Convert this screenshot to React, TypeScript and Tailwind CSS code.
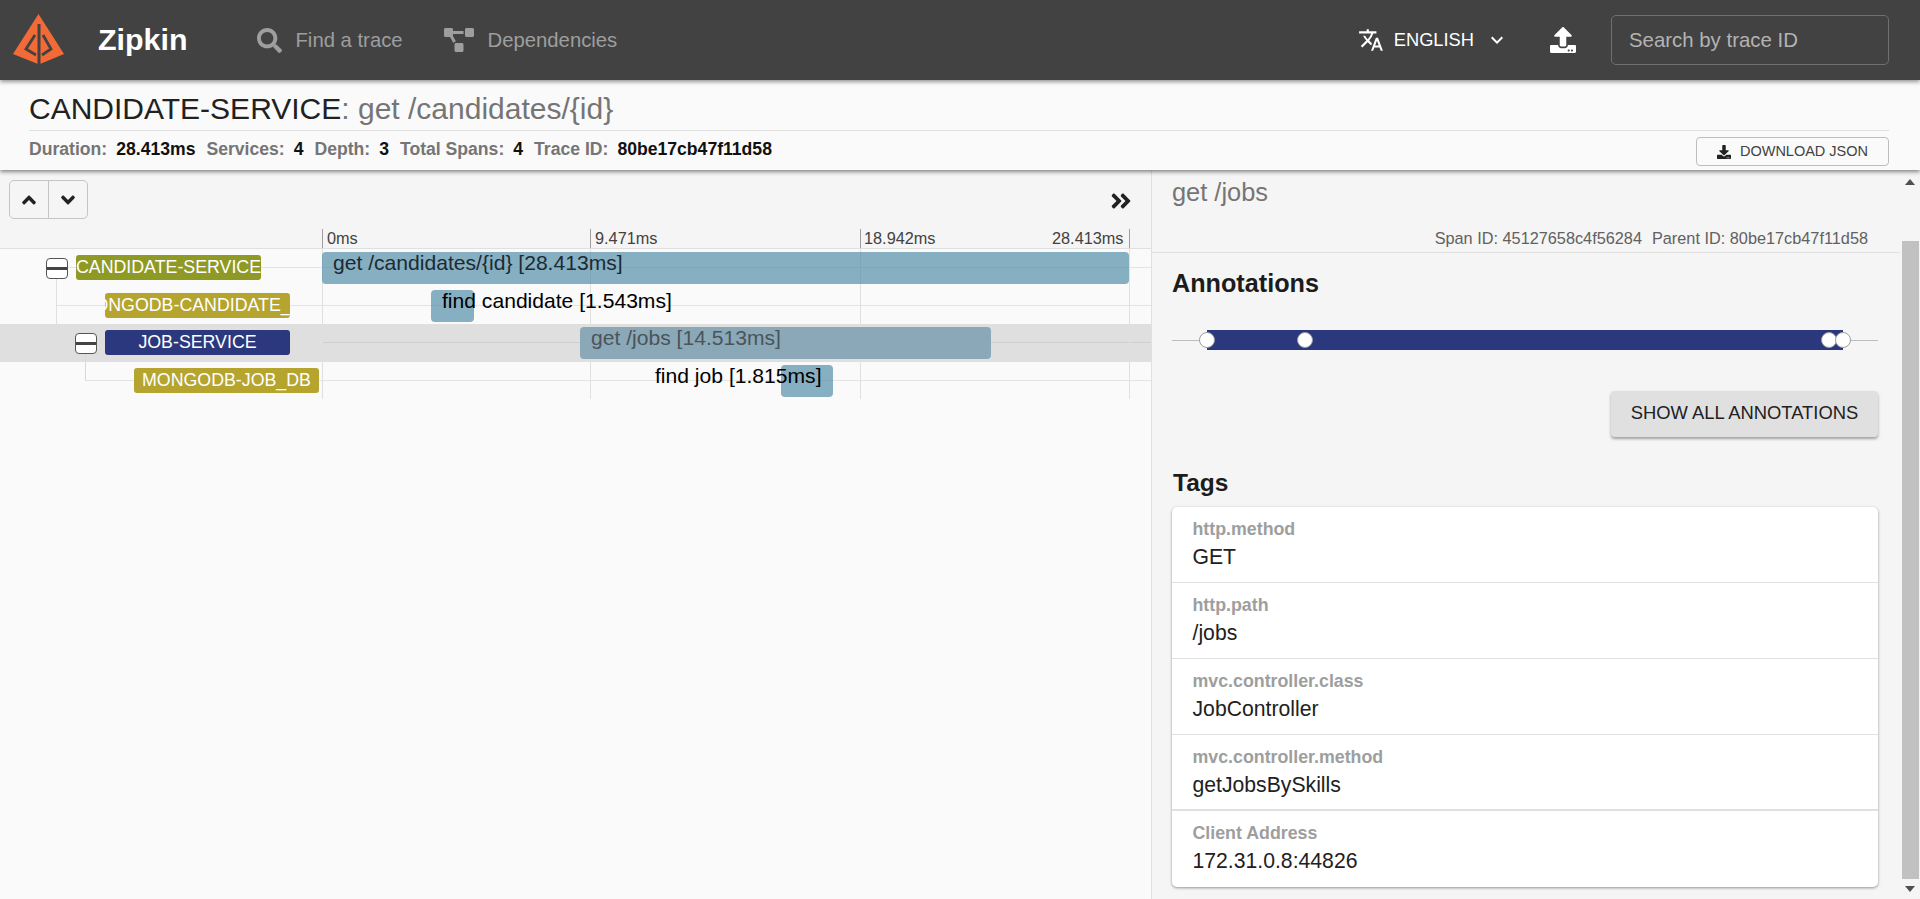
import React from "react";
import { FaSearch, FaProjectDiagram, FaUpload, FaDownload, FaAngleUp, FaAngleDown, FaAngleDoubleRight } from "react-icons/fa";
import { MdTranslate, MdExpandMore } from "react-icons/md";

const Logo = () => (
  <svg width="52" height="52" viewBox="0 0 52 52" className="shrink-0">
    <path d="M25.5 0 L51 40 L27 50 L25 50 L0 40 Z" fill="#f26b36" />
    <path d="M26 10 V50" stroke="#424242" strokeWidth="3" fill="none" />
    <path d="M22 21 L13 35 L23 41" stroke="#424242" strokeWidth="2.8" fill="none" />
    <path d="M30 21 L38 35 L29 41" stroke="#424242" strokeWidth="2.8" fill="none" />
  </svg>
);

const Toggle = () => (
  <div className="w-[21.5px] h-[21px] rounded-[4px] border-[1.5px] border-[#555] bg-white flex items-center shrink-0">
    <div className="w-full h-[3px] bg-[#444]" />
  </div>
);

const ticks = [322, 590, 860, 1129];

type Row = {
  service: string;
  color: string;
  depth: number;
  lineLeft: number;
  toggle?: boolean;
  barLeft: number;
  barWidth: number;
  text: string;
  textLeft: number;
  selected?: boolean;
};

const rows: Row[] = [
  { service: "CANDIDATE-SERVICE", color: "bg-[#8f9a26]", depth: 76, lineLeft: 67, toggle: true, barLeft: 322, barWidth: 807, text: "get /candidates/{id} [28.413ms]", textLeft: 333 },
  { service: "MONGODB-CANDIDATE_DB", color: "bg-[#b5a52f]", depth: 105, lineLeft: 56, barLeft: 431, barWidth: 43, text: "find candidate [1.543ms]", textLeft: 442 },
  { service: "JOB-SERVICE", color: "bg-[#2c387e]", depth: 105, lineLeft: 322, toggle: true, barLeft: 580, barWidth: 411, text: "get /jobs [14.513ms]", textLeft: 591, selected: true },
  { service: "MONGODB-JOB_DB", color: "bg-[#b5a52f]", depth: 134, lineLeft: 85, barLeft: 781, barWidth: 52, text: "find job [1.815ms]", textLeft: 655 },
];

const TimelineRow = ({ r, i }: { r: Row; i: number }) => (
  <div className={`relative h-[37.5px] ${r.selected ? "bg-[#dfdfdf]" : ""}`}>
    <div style={{ left: r.lineLeft }} className={`absolute right-0 top-[18px] h-px ${r.selected ? "bg-[#cfcfcf]" : "bg-[#e4e4e4]"}`} />
    {i === 1 && <div className="absolute left-[56px] w-px top-[-8px] h-[46px] bg-[#e0e0e0]" />}
    {i === 3 && <div className="absolute left-[85px] w-px top-[-8px] h-[27px] bg-[#d8d8d8]" />}
    {ticks.map((t) => (
      <div key={t} style={{ left: t }} className="absolute top-0 bottom-0 w-px bg-[#e0e0e0]" />
    ))}
    <div
      style={{ left: r.barLeft, width: r.barWidth }}
      className={`absolute top-[3px] h-[32px] rounded-[4px] ${r.selected ? "bg-[#8aa8b7]" : "bg-[#548fa9]/70"}`}
    />
    <div
      style={{ left: r.textLeft }}
      className={`absolute top-[2px] text-[21.1px] leading-[24px] whitespace-nowrap ${r.selected ? "text-[#4a5459]" : i === 0 ? "text-[#1c2a33]" : "text-black"}`}
    >
      {r.text}
    </div>
    <div style={{ left: r.depth }} className="absolute top-[6px] flex items-center">
      {r.toggle && (
        <div className="absolute left-[-30px] top-[2.5px]">
          <Toggle />
        </div>
      )}
      <div className={`w-[185px] h-[25px] rounded-[3px] ${r.color} text-white text-[17.8px] flex items-center justify-center overflow-hidden whitespace-nowrap`}>
        {r.service}
      </div>
    </div>
  </div>
);

const Stat = ({ label, value }: { label: string; value: string }) => (
  <span className="flex gap-[9px]">
    <span className="text-[#757575]">{label}</span>
    <span className="text-[#111]">{value}</span>
  </span>
);

const Tag = ({ k, v, extra }: { k: string; v: string; extra?: string }) => (
  <div className={`h-[76px] px-[20.5px] pt-[11px] ${extra ?? ""}`}>
    <div className="text-[17.8px] leading-[22px] font-bold text-[#9e9e9e]">{k}</div>
    <div className="text-[21.2px] leading-[26px] mt-[4px] text-[#212121]">{v}</div>
  </div>
);

const Dot = ({ x }: { x: number }) => (
  <div style={{ left: x }} className="absolute top-[-8px] w-[16px] h-[16px] -ml-[8px] rounded-full bg-white border border-[#9e9e9e]" />
);

export default function App() {
  return (
    <div className="h-[899px] w-[1920px] overflow-hidden flex flex-col bg-[#f5f5f5] font-['Liberation_Sans',Arial,sans-serif]">
      <header className="relative z-20 h-[80px] shrink-0 bg-[#424242] shadow-[0_2px_4px_rgba(0,0,0,0.4)] flex items-center pl-[13px] pr-[31px]">
        <Logo />
        <div className="ml-[33px] text-[30.4px] font-bold text-white">Zipkin</div>
        <div className="ml-[70px] flex items-center text-[#9e9e9e] text-[20.3px]">
          <FaSearch className="w-[25px] h-[25px]" />
          <span className="ml-[13px]">Find a trace</span>
        </div>
        <div className="ml-[41px] flex items-center text-[#9e9e9e] text-[20.3px]">
          <FaProjectDiagram className="w-[30px] h-[24px]" />
          <span className="ml-[14px]">Dependencies</span>
        </div>
        <div className="ml-auto flex items-center text-white">
          <MdTranslate className="w-[26px] h-[26px]" />
          <span className="ml-[10px] text-[18.3px]">ENGLISH</span>
          <MdExpandMore className="ml-[11px] w-[24px] h-[24px]" />
          <FaUpload className="ml-[41px] w-[26px] h-[26px]" />
          <div className="ml-[35px] w-[278px] h-[50px] rounded-[5px] border border-[#707070] flex items-center pl-[17px] text-[20.4px] text-[#b3b3b3]">
            Search by trace ID
          </div>
        </div>
      </header>

      <section className="relative z-10 h-[90px] shrink-0 bg-[#fafafa] shadow-[0_2px_4px_rgba(0,0,0,0.45)] pl-[29px] pr-[31px]">
        <div className="h-[51px] border-b border-[#e0e0e0] flex items-end pb-[1px] text-[30px] leading-[40px]">
          <span className="text-[#212121]">CANDIDATE-SERVICE</span>
          <span className="text-[#757575] whitespace-pre">: get /candidates/{"{id}"}</span>
        </div>
        <div className="flex justify-between">
          <div className="flex gap-[11px] mt-[6px] text-[17.6px] leading-[24px] font-bold">
            <Stat label="Duration:" value="28.413ms" />
            <Stat label="Services:" value="4" />
            <Stat label="Depth:" value="3" />
            <Stat label="Total Spans:" value="4" />
            <Stat label="Trace ID:" value="80be17cb47f11d58" />
          </div>
          <button className="mt-[6px] w-[193px] h-[29px] rounded-[4px] border border-[#bdbdbd] flex items-center justify-center gap-[9px] text-[14.5px] text-[#424242]">
            <FaDownload className="w-[14px] h-[14px] text-[#222]" />
            DOWNLOAD JSON
          </button>
        </div>
      </section>

      <main className="flex-1 flex min-h-0">
        <div className="w-[1152px] shrink-0 border-r border-[#e0e0e0] flex flex-col">
          <div className="h-[59px] shrink-0 flex items-start justify-between pt-[10px] pl-[9px] pr-[18px]">
            <div className="flex h-[39px] w-[79px] rounded-[5px] border border-[#c4c4c4]">
              <div className="w-1/2 border-r border-[#c4c4c4] flex items-center justify-center">
                <FaAngleUp className="w-[22px] h-[22px] text-[#222]" />
              </div>
              <div className="w-1/2 flex items-center justify-center">
                <FaAngleDown className="w-[22px] h-[22px] text-[#222]" />
              </div>
            </div>
            <FaAngleDoubleRight className="w-[24px] h-[24px] mt-[9px] text-[#222]" />
          </div>
          <div className="relative h-[20px] shrink-0 border-b border-[#e0e0e0] text-[16.3px] leading-[19px] text-[#424242]">
            {ticks.map((t) => (
              <div key={t} style={{ left: t }} className="absolute top-0 h-[19px] w-px bg-[#9e9e9e]" />
            ))}
            <span className="absolute left-[327px] top-[0px]">0ms</span>
            <span className="absolute left-[595px] top-[0px]">9.471ms</span>
            <span className="absolute left-[864px] top-[0px]">18.942ms</span>
            <span className="absolute left-[1052px] top-[0px]">28.413ms</span>
          </div>
          <div className="flex-1 bg-[#fafafa]">
            {rows.map((r, i) => (
              <TimelineRow key={r.service} r={r} i={i} />
            ))}
          </div>
        </div>

        <div className="w-[748px] shrink-0 flex flex-col">
          <div className="h-[83px] border-b border-[#e0e0e0] shrink-0 pl-[20px] pr-[32px] relative">
            <div className="text-[25.4px] leading-[30px] mt-[7px] text-[#757575]">get /jobs</div>
            <div className="flex justify-end gap-[10px] mt-[21px] text-[16.3px] leading-[20px] text-[#616161]">
              <span>Span ID: 45127658c4f56284</span>
              <span>Parent ID: 80be17cb47f11d58</span>
            </div>
          </div>
          <div className="pl-[20px] pr-[22px]">
            <h2 className="text-[25.2px] leading-[30px] font-bold text-[#1c1c1c] mt-[15px]">Annotations</h2>
            <div className="relative mt-[42px] h-px bg-[#bdbdbd] w-[706px]">
              <div className="absolute left-[35px] w-[636px] top-[-10px] h-[20px] bg-[#2c387e]" />
              <Dot x={35} />
              <Dot x={133} />
              <Dot x={657} />
              <Dot x={671} />
            </div>
            <div className="flex justify-end mt-[50px] w-[706px]">
              <button className="w-[267px] h-[46px] pb-[2px] rounded-[4px] bg-[#e0e0e0] shadow-[0_2px_3px_rgba(0,0,0,0.35)] text-[18.4px] text-[#212121]">
                SHOW ALL ANNOTATIONS
              </button>
            </div>
            <h2 className="text-[24.5px] leading-[30px] font-bold text-[#1c1c1c] mt-[31px] ml-[1px]">Tags</h2>
            <div className="mt-[9px] w-[706px] bg-white rounded-[5px] shadow-[0_1px_3px_rgba(0,0,0,0.4)]">
              <Tag k="http.method" v="GET" extra="border-b border-[#e0e0e0]" />
              <Tag k="http.path" v="/jobs" extra="border-b border-[#e0e0e0]" />
              <Tag k="mvc.controller.class" v="JobController" extra="border-b border-[#e0e0e0]" />
              <Tag k="mvc.controller.method" v="getJobsBySkills" extra="border-b-2 border-[#e0e0e0]" />
              <Tag k="Client Address" v="172.31.0.8:44826" />
            </div>
          </div>
        </div>

        <div className="w-[20px] shrink-0 bg-[#f5f5f5] flex flex-col items-center relative">
          <div className="mt-[9px] w-0 h-0 border-l-[5px] border-r-[5px] border-b-[6px] border-l-transparent border-r-transparent border-b-[#505050]" />
          <div className="mt-[56px] w-[17px] h-[638px] bg-[#c1c1c1]" />
          <div className="mt-[7px] w-0 h-0 border-l-[5px] border-r-[5px] border-t-[6px] border-l-transparent border-r-transparent border-t-[#505050]" />
        </div>
      </main>
    </div>
  );
}
